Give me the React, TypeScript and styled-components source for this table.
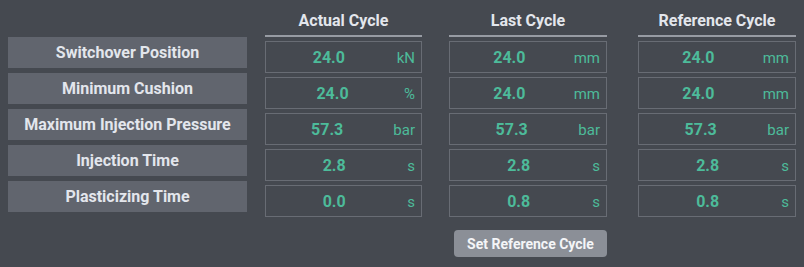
import React from 'react';
import styled, { createGlobalStyle } from 'styled-components';

const GlobalStyle = createGlobalStyle`
  html, body {
    margin: 0;
    padding: 0;
    background: #454950;
  }
  body {
    font-family: Roboto, "Liberation Sans", sans-serif;
  }
`;

type Cell = { value: string; unit: string };

const labels = [
  'Switchover Position',
  'Minimum Cushion',
  'Maximum Injection Pressure',
  'Injection Time',
  'Plasticizing Time',
];

const columns: { title: string; offset: number; width: number; cells: Cell[] }[] = [
  {
    title: 'Actual Cycle',
    offset: 18,
    width: 157,
    cells: [
      { value: '24.0', unit: 'kN' },
      { value: '24.0', unit: '%' },
      { value: '57.3', unit: 'bar' },
      { value: '2.8', unit: 's' },
      { value: '0.0', unit: 's' },
    ],
  },
  {
    title: 'Last Cycle',
    offset: 27,
    width: 158,
    cells: [
      { value: '24.0', unit: 'mm' },
      { value: '24.0', unit: 'mm' },
      { value: '57.3', unit: 'bar' },
      { value: '2.8', unit: 's' },
      { value: '0.8', unit: 's' },
    ],
  },
  {
    title: 'Reference Cycle',
    offset: 31,
    width: 158,
    cells: [
      { value: '24.0', unit: 'mm' },
      { value: '24.0', unit: 'mm' },
      { value: '57.3', unit: 'bar' },
      { value: '2.8', unit: 's' },
      { value: '0.8', unit: 's' },
    ],
  },
];

export default function App() {
  return (
    <>
      <GlobalStyle />
      <Panel>
        <Table>
          <LabelColumn>
            {labels.map((l) => (
              <Label key={l}>{l}</Label>
            ))}
          </LabelColumn>
          {columns.map((col) => (
            <ValueColumn key={col.title} $offset={col.offset} $width={col.width}>
              <Heading>{col.title}</Heading>
              <Cells>
                {col.cells.map((c, i) => (
                  <ValueBox key={i}>
                    <Number>{c.value}</Number>
                    <Unit>{c.unit}</Unit>
                  </ValueBox>
                ))}
              </Cells>
              {col.title === 'Last Cycle' && (
                <ActionRow>
                  <Button>Set Reference Cycle</Button>
                </ActionRow>
              )}
            </ValueColumn>
          ))}
        </Table>
      </Panel>
    </>
  );
}

const Panel = styled.div`
  width: 804px;
  height: 267px;
  box-sizing: border-box;
  padding-left: 8px;
  background: #454950;
  overflow: hidden;
`;

const Table = styled.div`
  display: flex;
  align-items: flex-start;
`;

const LabelColumn = styled.div`
  width: 239px;
  padding-top: 37px;
  display: flex;
  flex-direction: column;
  gap: 5px;
`;

const Label = styled.div`
  height: 31px;
  background: #61656e;
  color: #e3e6ec;
  font-size: 16px;
  font-weight: 700;
  display: flex;
  align-items: center;
  justify-content: center;
`;

const ValueColumn = styled.div<{ $offset: number; $width: number }>`
  margin-left: ${(p) => p.$offset}px;
  width: ${(p) => p.$width}px;
  display: flex;
  flex-direction: column;
`;

const Heading = styled.div`
  height: 37px;
  box-sizing: border-box;
  padding-top: 5px;
  border-bottom: 2px solid #979ba3;
  color: #e3e6ec;
  font-size: 16px;
  font-weight: 700;
  display: flex;
  align-items: center;
  justify-content: center;
`;

const Cells = styled.div`
  margin-top: 4px;
  display: flex;
  flex-direction: column;
  gap: 4px;
`;

const ValueBox = styled.div`
  height: 32px;
  box-sizing: border-box;
  border: 1px solid #686c74;
  display: flex;
  align-items: center;
  padding: 1px 6px 0 0;
  gap: 5px;
  color: #4dbb9a;
`;

const Number = styled.span`
  flex: 1;
  text-align: center;
  font-size: 16px;
  font-weight: 700;
`;

const Unit = styled.span`
  font-size: 15px;
  font-weight: 400;
`;

const ActionRow = styled.div`
  margin-top: 13px;
  display: flex;
  justify-content: flex-end;
`;

const Button = styled.button`
  width: 153px;
  height: 27px;
  border: none;
  border-radius: 4px;
  background: #8b8f97;
  color: #f4f5f7;
  font-family: Roboto, "Liberation Sans", sans-serif;
  font-size: 14px;
  font-weight: 700;
  padding: 0;
  cursor: pointer;
`;
